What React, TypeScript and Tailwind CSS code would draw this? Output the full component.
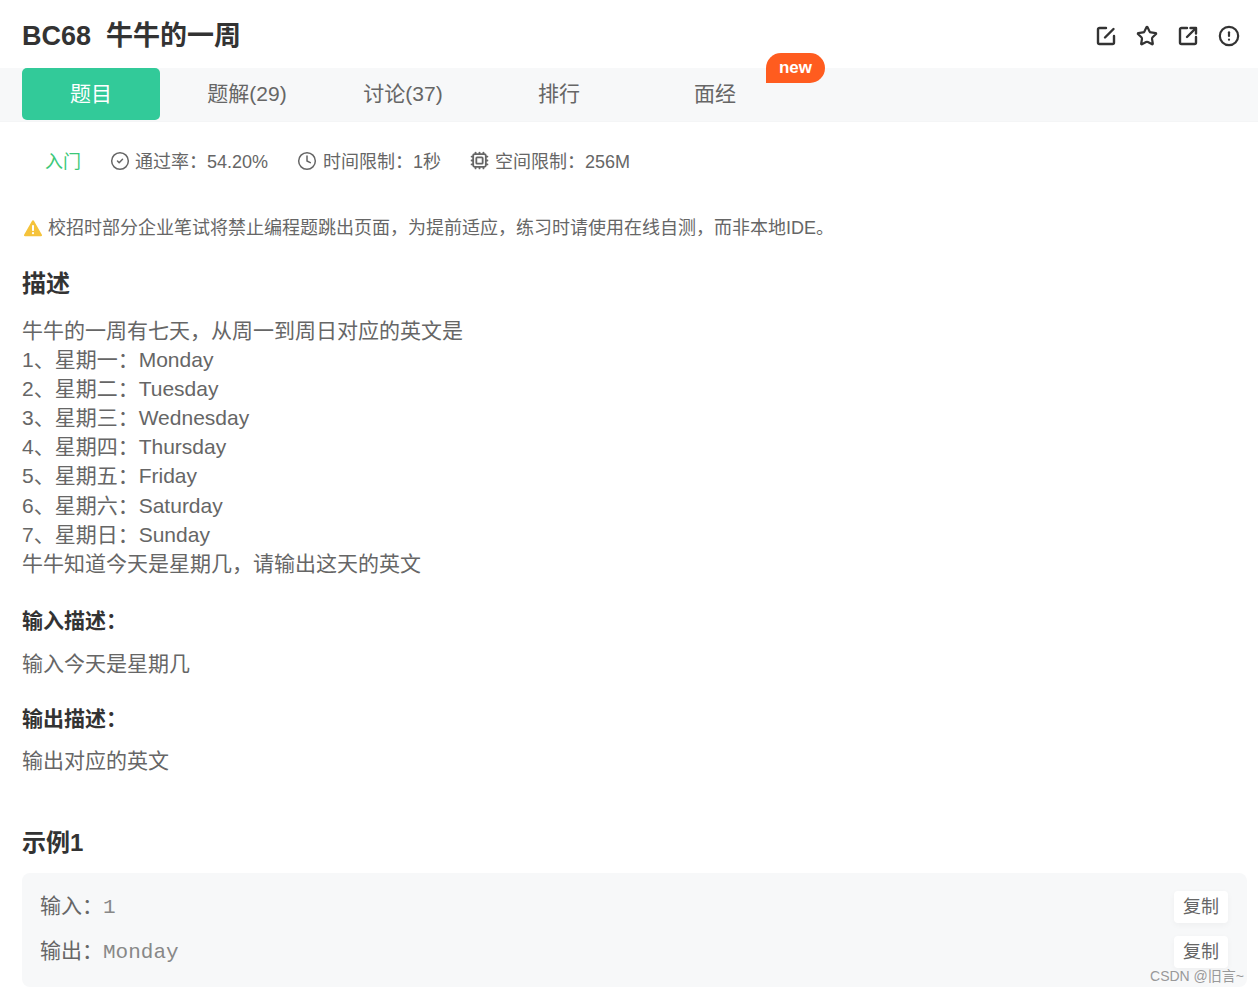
import { CircleCheck, Clock, Cpu, CircleAlert, Star } from "lucide-react";

const lines = [
  "牛牛的一周有七天，从周一到周日对应的英文是",
  "1、星期一：Monday",
  "2、星期二：Tuesday",
  "3、星期三：Wednesday",
  "4、星期四：Thursday",
  "5、星期五：Friday",
  "6、星期六：Saturday",
  "7、星期日：Sunday",
  "牛牛知道今天是星期几，请输出这天的英文",
];

const tabs = ["题解(29)", "讨论(37)", "排行", "面经"];

function EditIcon() {
  return (
    <svg width="22" height="22" viewBox="0 0 22 22" fill="none" stroke="currentColor" strokeWidth="2.4" strokeLinecap="round" strokeLinejoin="round">
      <path d="M11 3H4.5A1.5 1.5 0 0 0 3 4.5v13A1.5 1.5 0 0 0 4.5 19h13a1.5 1.5 0 0 0 1.5-1.5V11" />
      <path d="M18.5 4 10 12.5" />
    </svg>
  );
}

function ShareIcon() {
  return (
    <svg width="22" height="22" viewBox="0 0 22 22" fill="none" stroke="currentColor" strokeWidth="2.4" strokeLinecap="round" strokeLinejoin="round">
      <path d="M10 3H4.5A1.5 1.5 0 0 0 3 4.5v13A1.5 1.5 0 0 0 4.5 19h13a1.5 1.5 0 0 0 1.5-1.5V12" />
      <path d="M13.5 3H19v5.5" />
      <path d="M18.5 3.5 10 12" />
    </svg>
  );
}

function WarnIcon() {
  return (
    <svg width="20" height="20" viewBox="0 0 20 20" className="mr-[5px] ml-[1px]">
      <path d="M10 2.2a1 1 0 0 1 .9.5l8 14a1 1 0 0 1-.9 1.5H2a1 1 0 0 1-.9-1.5l8-14a1 1 0 0 1 .9-.5z" fill="#f5c33b" />
      <rect x="9" y="7" width="2" height="6" rx="0.8" fill="#fff" />
      <circle cx="10" cy="15.2" r="1.1" fill="#fff" />
    </svg>
  );
}

function Sample({ label, value }: { label: string; value: string }) {
  return (
    <div className="flex items-center justify-between h-[45px]">
      <div className="text-[21px] text-[#666]">
        {label}
        <span className="font-['Liberation_Mono',monospace] text-[21px] text-[#888]">{value}</span>
      </div>
      <button className="w-[54px] h-[32px] bg-white rounded-sm text-[18px] text-[#666] shadow-[0_2px_6px_rgba(0,0,0,0.04)]">复制</button>
    </div>
  );
}

export default function App() {
  return (
    <div className="relative w-[1258px] h-[992px] overflow-hidden bg-white font-['Liberation_Sans','Noto_Sans_CJK_SC',sans-serif] text-[#666]">
      <div className="flex items-center justify-between h-[68px] pl-[22px] pr-[18px] pt-[4px]">
        <h1 className="text-[27px] font-bold text-[#333]">BC68&nbsp; 牛牛的一周</h1>
        <div className="flex items-center gap-[19px] text-[#333]">
          <EditIcon />
          <Star size={22} strokeWidth={2.4} />
          <ShareIcon />
          <CircleAlert size={22} strokeWidth={2.4} />
        </div>
      </div>

      <div className="flex h-[54px] px-[22px] bg-[#f7f8f9] border-b border-[#f4f5f6]">
        <div className="flex items-center justify-center w-[138px] h-[52px] mr-[9px] rounded-[5px] bg-[#32ca99] text-white text-[21px]">题目</div>
        {tabs.map((t) => (
          <div key={t} className="relative flex items-center justify-center w-[156px] h-[52px] text-[21px]">
            {t}
            {t === "面经" && (
              <span className="absolute left-[129px] top-[-15px] flex items-center justify-center w-[59px] h-[30px] rounded-t-[15px] rounded-br-[15px] bg-[#ff5c1f] text-white text-[17px] font-bold">new</span>
            )}
          </div>
        ))}
      </div>

      <div className="flex items-center h-[80px] pl-[45px] text-[18px]">
        <span className="text-[#3cc878]">入门</span>
        <CircleCheck size={20} strokeWidth={1.8} className="ml-[29px] mr-[5px] mt-[-3px]" />
        <span>通过率：54.20%</span>
        <Clock size={20} strokeWidth={1.8} className="ml-[29px] mr-[6px] mt-[-3px]" />
        <span>时间限制：1秒</span>
        <Cpu size={19} strokeWidth={2.3} className="ml-[29px] mr-[6px] mt-[-3px]" />
        <span>空间限制：256M</span>
      </div>

      <div className="flex items-center h-[52px] pl-[22px] text-[18px]">
        <WarnIcon />
        校招时部分企业笔试将禁止编程题跳出页面，为提前适应，练习时请使用在线自测，而非本地IDE。
      </div>

      <div className="pl-[22px] pr-[11px]">
        <h2 className="text-[24px] font-bold text-[#333] mt-[13px] mb-[14.5px] leading-[34px]">描述</h2>
        <div className="text-[21px] leading-[29.17px]">
          {lines.map((l) => <div key={l}>{l}</div>)}
        </div>
        <h3 className="text-[21px] font-bold text-[#333] mt-[25.5px] leading-[34px]">输入描述：</h3>
        <p className="text-[21px] mt-[11px] leading-[30px]">输入今天是星期几</p>
        <h3 className="text-[21px] font-bold text-[#333] mt-[23px] leading-[34px]">输出描述：</h3>
        <p className="text-[21px] mt-[10px] leading-[30px]">输出对应的英文</p>
        <h2 className="text-[24px] font-bold text-[#333] mt-[50px] leading-[34px]">示例1</h2>
        <div className="mt-[13px] h-[114px] rounded-lg bg-[#f7f8f9] pl-[18px] pr-[19px] pt-[12px]">
          <Sample label="输入：" value="1" />
          <Sample label="输出：" value="Monday" />
        </div>
      </div>

      <span className="absolute right-[14px] top-[966px] text-[14px] text-[#999]">CSDN @旧言~</span>
    </div>
  );
}
